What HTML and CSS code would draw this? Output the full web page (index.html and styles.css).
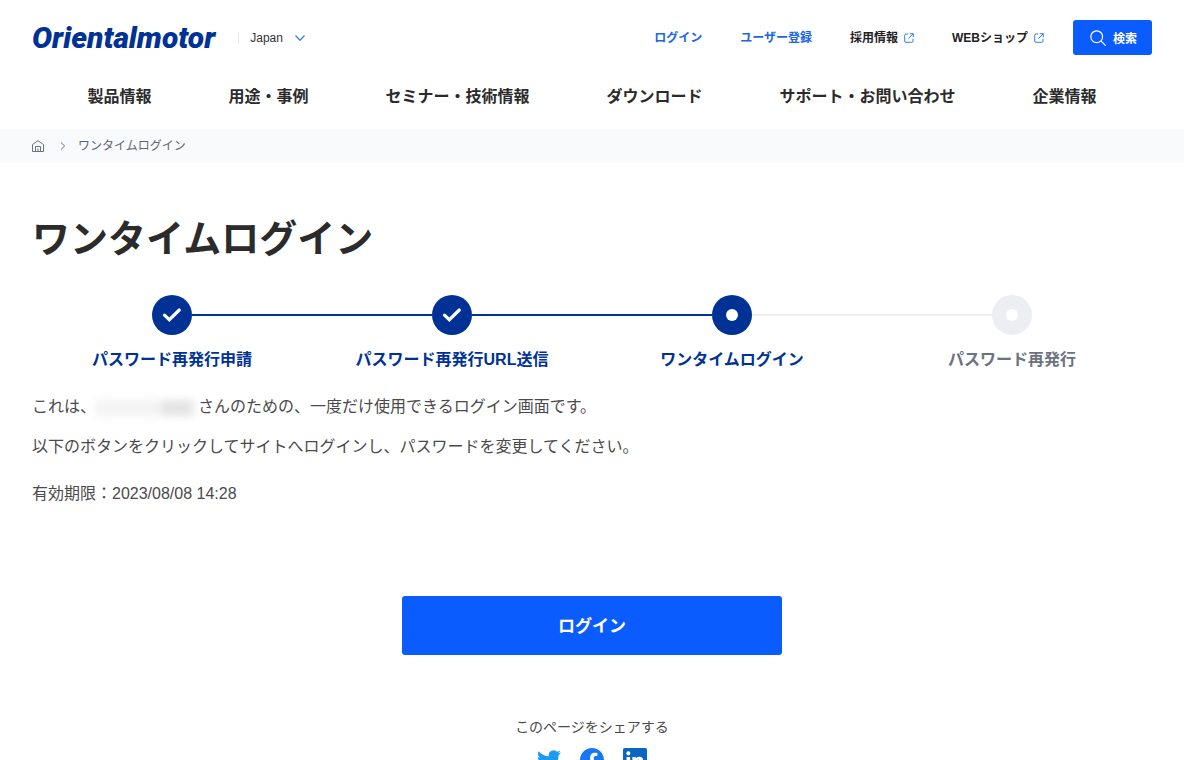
FILE: index.html
```html
<!DOCTYPE html>
<html lang="ja">
<head>
  <meta charset="UTF-8">
  <meta name="viewport" content="width=device-width, initial-scale=1.0">
  <title>ワンタイムログイン</title>
  <link rel="stylesheet" href="styles.css">
</head>
<body>

  <header>
    <div class="header-top">
      <a href="#" class="logo">Orientalmotor</a>
      <button type="button" class="region">
        Japan
        <svg width="12" height="8" viewBox="0 0 12 8"><path d="M1.500 1.500 6 6.200l4.500-4.700" fill="none" stroke="#3d7fe8" stroke-width="1.300"/></svg>
      </button>
      <div class="header-links">
        <a href="#" class="blue">ログイン</a>
        <a href="#" class="blue">ユーザー登録</a>
        <a href="#">採用情報
          <svg width="10" height="10" viewBox="0 0 10 10"><path d="M4.200 1H2Q.7 1 .7 2.300V8Q.7 9.300 2 9.300h5.700Q9 9.300 9 8V5.800M5.800.7h3.500v3.500M9.200.8 4.500 5.500" fill="none" stroke="#2f7df0"/></svg>
        </a>
        <a href="#">WEBショップ
          <svg width="10" height="10" viewBox="0 0 10 10"><path d="M4.200 1H2Q.7 1 .7 2.300V8Q.7 9.300 2 9.300h5.700Q9 9.300 9 8V5.800M5.800.7h3.500v3.500M9.200.8 4.500 5.500" fill="none" stroke="#2f7df0"/></svg>
        </a>
      </div>
      <button type="button" class="search-btn">
        <svg width="16" height="16" viewBox="0 0 16 16" fill="none" stroke="#fff" stroke-width="1.200"><circle cx="6.700" cy="6.700" r="5.900"/><path d="m11 11 4.600 4.600"/></svg>
        検索
      </button>
    </div>
    <nav>
      <a href="#">製品情報</a>
      <a href="#">用途・事例</a>
      <a href="#">セミナー・技術情報</a>
      <a href="#">ダウンロード</a>
      <a href="#">サポート・お問い合わせ</a>
      <a href="#">企業情報</a>
    </nav>
  </header>

  <div class="breadcrumb">
    <a href="#" aria-label="ホーム">
      <svg width="12" height="12" viewBox="0 0 12 12" fill="none" stroke="#6b7280"><path d="M.5 4.500 6 .7l5.500 3.800v7H.5zM3.500 11.500v-5h5v5M6 8.500v3"/></svg>
    </a>
    <svg width="6" height="8" viewBox="0 0 6 8" fill="none" stroke="#6b7280"><path d="m1 .5 3.700 3.500L1 7.500"/></svg>
    <span>ワンタイムログイン</span>
  </div>

  <main>
    <h1>ワンタイムログイン</h1>

    <ol class="steps">
      <li class="done">
        <div class="marker">
          <span class="circle"><svg width="20" height="16" viewBox="0 0 20 16"><path d="m2.500 8.200 4.800 4.500L17.300 3" fill="none" stroke="#fff" stroke-width="3.200" stroke-linecap="round"/></svg></span>
        </div>
        <span>パスワード再発行申請</span>
      </li>
      <li class="done">
        <div class="marker">
          <span class="circle"><svg width="20" height="16" viewBox="0 0 20 16"><path d="m2.500 8.200 4.800 4.500L17.300 3" fill="none" stroke="#fff" stroke-width="3.200" stroke-linecap="round"/></svg></span>
        </div>
        <span>パスワード再発行URL送信</span>
      </li>
      <li class="current">
        <div class="marker"><span class="circle"><span class="dot"></span></span></div>
        <span>ワンタイムログイン</span>
      </li>
      <li>
        <div class="marker"><span class="circle"><span class="dot"></span></span></div>
        <span>パスワード再発行</span>
      </li>
    </ol>

    <p>これは、<span class="user-name"><i></i><i></i></span>さんのための、一度だけ使用できるログイン画面です。</p>
    <p>以下のボタンをクリックしてサイトへログインし、パスワードを変更してください。</p>
    <p class="expires">有効期限：2023/08/08 14:28</p>

    <button type="submit" class="login-btn">ログイン</button>

    <div class="share">
      <span>このページをシェアする</span>
      <div class="share-icons">
        <a href="#" aria-label="Twitter">
          <svg width="24" height="24" viewBox="0 0 24 24"><path fill="#1d9bf0" d="M23.950 4.570a10 10 0 0 1-2.820.77 4.960 4.960 0 0 0 2.160-2.720c-.95.55-2 .95-3.130 1.180a4.920 4.920 0 0 0-8.380 4.480C7.690 8.090 4.070 6.130 1.640 3.160a4.820 4.820 0 0 0-.67 2.480c0 1.710.87 3.210 2.190 4.100a4.900 4.900 0 0 1-2.230-.62v.06a4.920 4.920 0 0 0 3.950 4.830 5 5 0 0 1-2.210.08 4.940 4.940 0 0 0 4.600 3.420A9.870 9.870 0 0 1 0 19.540a14 14 0 0 0 7.550 2.210c9.050 0 14-7.500 14-13.980 0-.21 0-.42-.02-.63a9.940 9.940 0 0 0 2.420-2.570z"/></svg>
        </a>
        <a href="#" aria-label="Facebook">
          <svg width="24" height="24" viewBox="0 0 24 24"><path fill="#1877f2" d="M24 12.070C24 5.400 18.630 0 12 0S0 5.400 0 12.070C0 18.100 4.390 23.090 10.130 24v-8.440H7.080v-3.490h3.050V9.410c0-3.020 1.790-4.690 4.530-4.690 1.310 0 2.680.24 2.680.24v2.970h-1.510c-1.490 0-1.960.93-1.960 1.890v2.250h3.330l-.53 3.490h-2.800V24C19.610 23.090 24 18.100 24 12.070z"/></svg>
        </a>
        <a href="#" aria-label="LinkedIn">
          <svg width="24" height="24" viewBox="0 0 24 24"><path fill="#0a66c2" d="M20.450 20.450h-3.560v-5.570c0-1.330-.02-3.040-1.850-3.040-1.850 0-2.140 1.450-2.140 2.940v5.670H9.350V9h3.410v1.560h.05c.48-.9 1.640-1.850 3.370-1.850 3.600 0 4.270 2.370 4.270 5.460v6.280zM5.340 7.430a2.060 2.060 0 1 1 0-4.120 2.060 2.060 0 0 1 0 4.120zm1.780 13.020H3.560V9h3.560v11.450zM22.220 0H1.770C.79 0 0 .77 0 1.730v20.540C0 23.230.79 24 1.770 24h20.450c.98 0 1.780-.77 1.780-1.730V1.730C24 .77 23.200 0 22.220 0z"/></svg>
        </a>
      </div>
    </div>
  </main>

</body>
</html>
```

FILE: styles.css
```css
* {
  box-sizing: border-box;
}

body {
  margin: 0;
  font-family: "Liberation Sans", "Noto Sans CJK JP", sans-serif;
  font-size: 16px;
  line-height: 24px;
  color: #4a4a4a;
  background-color: #fff;
}

a {
  color: inherit;
  text-decoration: none;
}

button {
  font-family: inherit;
  border: none;
  cursor: pointer;
}

svg {
  display: block;
  flex-shrink: 0;
}

.header-top {
  display: flex;
  align-items: center;
  padding: 20px 32px 0;
}

.logo {
  font-family: Roboto, "Liberation Sans", sans-serif;
  font-size: 30px;
  font-weight: 900;
  font-style: italic;
  line-height: 35px;
  color: #003296;
}

.region {
  display: flex;
  align-items: center;
  gap: 11px;
  margin-left: 23px;
  padding: 0 0 0 11px;
  border-left: 1px solid #e5e7eb;
  background: none;
  font-size: 12px;
  line-height: 12px;
  color: #333;
}

.header-links {
  display: flex;
  align-items: center;
  gap: 38px;
  margin-left: auto;
  font-size: 12px;
  font-weight: bold;
  color: #222;
}

.header-links a {
  display: flex;
  align-items: center;
  gap: 6px;
}

.header-links .blue {
  color: #1a66e8;
}

.search-btn {
  display: flex;
  align-items: center;
  justify-content: center;
  gap: 7px;
  height: 35px;
  margin-left: 29px;
  padding: 0 15px 0 17px;
  border-radius: 3px;
  background-color: #0a5cff;
  color: #fff;
  font-size: 12px;
  font-weight: bold;
}

nav {
  display: flex;
  justify-content: center;
  gap: 77px;
  padding: 30px 0 20px;
  font-weight: bold;
  color: #2b2b2b;
  white-space: nowrap;
}

.breadcrumb {
  display: flex;
  align-items: center;
  gap: 12px;
  padding: 5px 32px;
  background-color: #f9fafc;
  font-size: 12px;
  color: #5f6570;
}

.breadcrumb a {
  margin-right: 4px;
}

main {
  padding: 48px 32px 0;
}

h1 {
  margin: 0;
  font-size: 38px;
  line-height: 56px;
  color: #2b2b2b;
}

/* steps */
.steps {
  display: grid;
  grid-template-columns: repeat(4, 1fr);
  margin: 28px 0 23px;
  padding: 0;
  list-style: none;
  font-weight: bold;
  text-align: center;
  color: #6b7280;
}

.marker {
  display: flex;
  align-items: center;
  margin-bottom: 13px;
}

.marker::before,
.marker::after {
  content: "";
  flex: 1;
  height: 2px;
  background-color: #eceef1;
}

.circle {
  display: flex;
  align-items: center;
  justify-content: center;
  width: 40px;
  height: 40px;
  border-radius: 50%;
  background-color: #eceef1;
}

.dot {
  width: 12px;
  height: 12px;
  border-radius: 50%;
  background-color: #fff;
}

.done,
.current {
  color: #003296;
}

.done .circle,
.current .circle,
.done .marker::before,
.done .marker::after,
.current .marker::before {
  background-color: #003296;
}

.steps li:first-child .marker::before,
.steps li:last-child .marker::after {
  background-color: transparent;
}

p {
  margin: 0 0 16px;
}

.user-name {
  display: inline-flex;
  gap: 2px;
  margin-right: 4px;
  vertical-align: middle;
  filter: blur(4px);
}

.user-name i {
  width: 62px;
  height: 16px;
  background-color: #f3f3f3;
}

.user-name i:last-child {
  width: 34px;
  background-color: #e4e4e4;
}

.expires {
  margin-top: 23px;
}

.login-btn {
  display: block;
  width: 34%;
  height: 59px;
  margin: 90px auto 0;
  padding: 0 0 3px;
  border-radius: 3px;
  background-color: #0a5cff;
  color: #fff;
  font-size: 17px;
  font-weight: bold;
}

.share {
  display: flex;
  flex-direction: column;
  align-items: center;
  gap: 9px;
  margin-top: 60px;
  font-size: 14px;
}

.share-icons {
  display: flex;
  gap: 19px;
}
```
